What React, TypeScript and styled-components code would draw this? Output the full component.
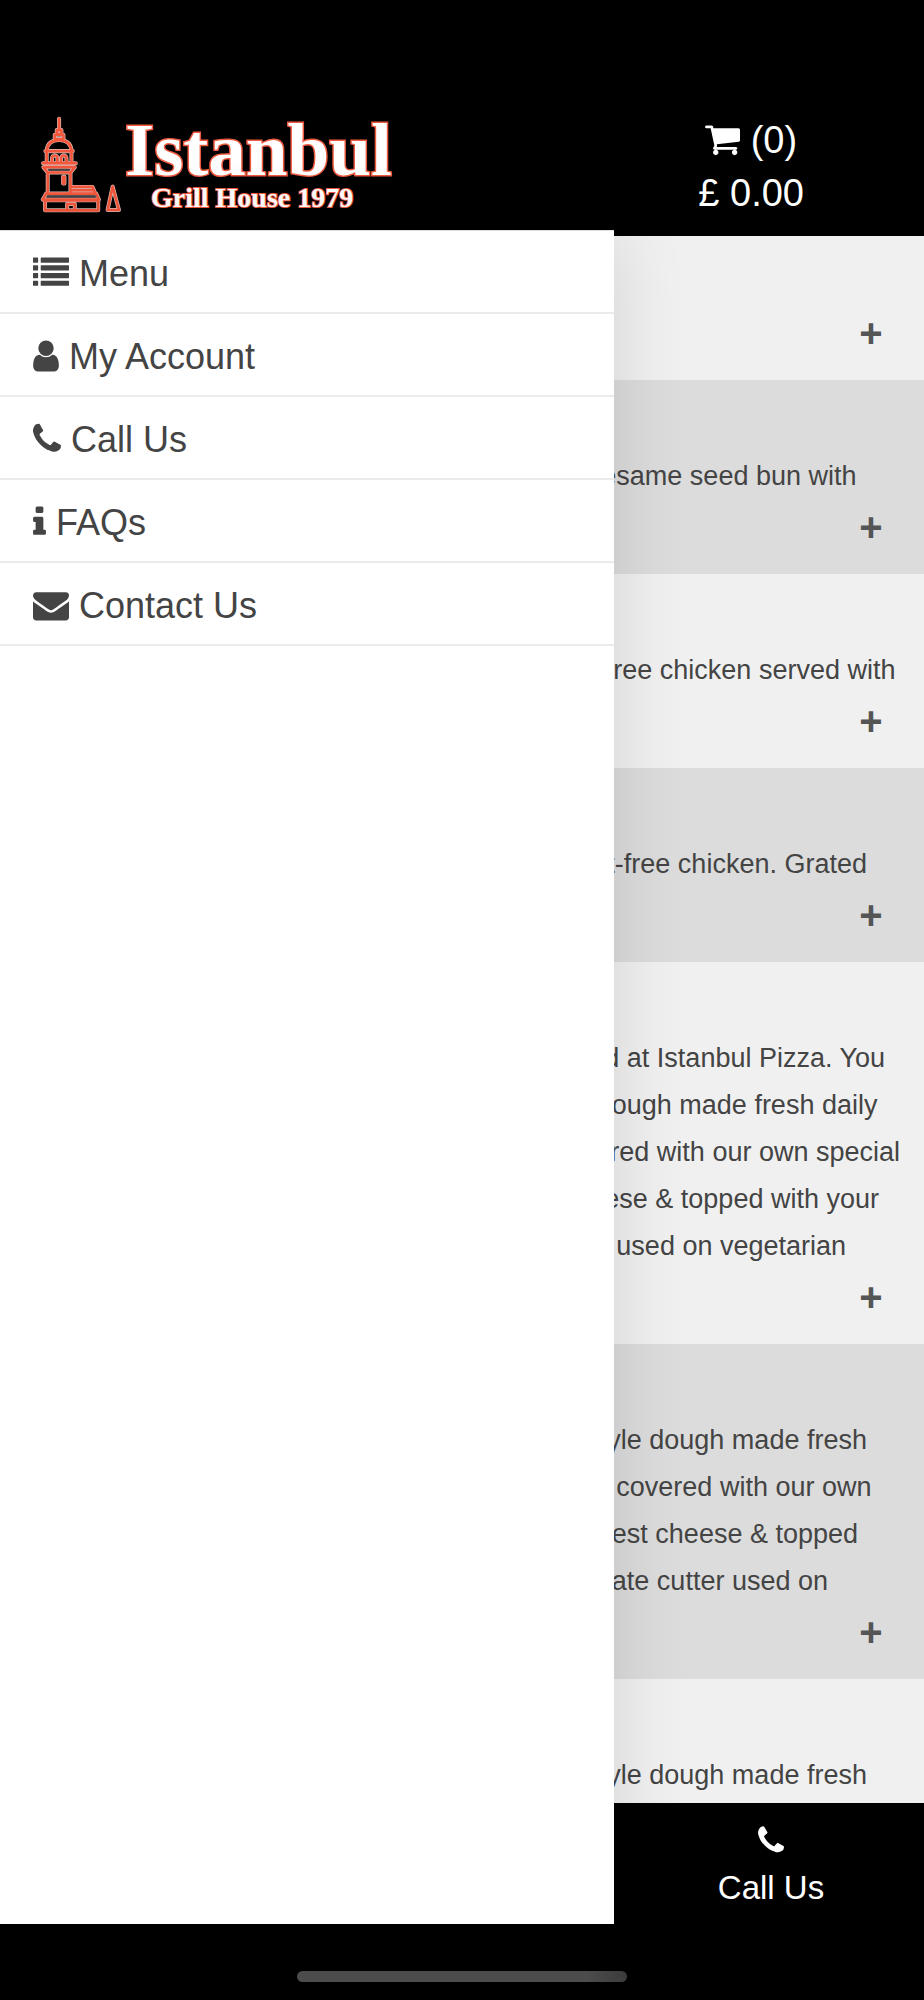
import React from 'react';
import styled, { createGlobalStyle } from 'styled-components';

const GlobalStyle = createGlobalStyle`
  * { box-sizing: border-box; }
  body {
    margin: 0;
    background: #000;
    color: #444;
    font-family: "Liberation Sans", Arial, sans-serif;
  }
`;

const Page = styled.div`
  position: relative;
  display: flex;
  flex-direction: column;
  height: 100vh;
  overflow: hidden;
`;

const Header = styled.header`
  display: flex;
  justify-content: space-between;
  flex: none;
  min-height: 236px;
  padding: 114px 0 0 40px;
  background: #000;
`;

const Logo = styled.a`
  display: flex;
  align-items: flex-start;
  gap: 3px;
  color: #fff;
  text-decoration: none;
`;

const Tower = styled.svg`
  flex: none;
  width: 82px;
  height: 97px;
  margin-top: 2px;
`;

const Wordmark = styled.span`
  display: flex;
  flex-direction: column;
  padding-top: 5px;
  font-family: "Liberation Serif", "Times New Roman", serif;
  font-weight: 700;
  white-space: nowrap;
  paint-order: stroke fill;
`;

const BrandName = styled.span`
  font-size: 75px;
  line-height: 62px;
  -webkit-text-stroke: 3px #ee5a40;
`;

const BrandTag = styled.span`
  padding-left: 26px;
  font-size: 28px;
  line-height: 34px;
  -webkit-text-stroke: 2px #ee5a40;
`;

const Cart = styled.a`
  width: 33%;
  padding-right: 54px;
  color: #fff;
  font-size: 38px;
  line-height: 53px;
  text-align: center;
  text-decoration: none;
`;

const CartLine = styled.span`
  display: block;
`;

const Glyph = styled.svg<{ $w: number; $h: number }>`
  width: ${(p) => p.$w}px;
  height: ${(p) => p.$h}px;
  vertical-align: -5px;
  fill: currentColor;
`;

const Dishes = styled.main`
  flex: 1;
  min-height: 0;
  overflow: hidden;
  background: #f0f0f0;
`;

const Dish = styled.article<{ $scrolled?: boolean }>`
  padding-top: ${(p) => (p.$scrolled ? 70 : 73)}px;
  background: #f0f0f0;
  &:nth-child(even) { background: #dcdcdc; }
`;

const Description = styled.p`
  margin: 0;
  padding: 0 18px 0 34px;
  font-size: 27px;
  line-height: 47px;
`;

const Actions = styled.div`
  display: flex;
  justify-content: flex-end;
  height: 74px;
  padding-right: 23px;
`;

const AddButton = styled.button`
  width: 60px;
  height: 54px;
  padding: 0;
  border: 0;
  background: none;
  color: #555;
  font: 700 40px/54px "Liberation Sans", Arial, sans-serif;
`;

const Drawer = styled.nav`
  position: absolute;
  top: 230px;
  bottom: 76px;
  left: 0;
  width: 614px;
  max-width: 90%;
  border-top: 1px solid #ddd;
  background: #fff;
  box-shadow: 0 0 70px rgba(0, 0, 0, 0.12);
`;

const DrawerLink = styled.a`
  display: block;
  padding: 4px 0 0 33px;
  border-bottom: 2px solid #ebebeb;
  color: #444;
  font-size: 36px;
  line-height: 77px;
  text-decoration: none;
`;

const TabBar = styled.footer`
  display: grid;
  grid-template-columns: repeat(3, 1fr);
  flex: none;
  height: 121px;
  background: #000;
`;

const Tab = styled.a`
  display: flex;
  flex-direction: column;
  align-items: center;
  grid-column: 3;
  padding: 21px 0 0 2px;
  color: #fff;
  font-size: 33px;
  line-height: 48px;
  text-decoration: none;
`;

const TabLabel = styled.span`
  padding-top: 7px;
`;

const HomeBar = styled.div`
  display: flex;
  justify-content: center;
  flex: none;
  height: 76px;
  padding-top: 47px;
  background: #000;
`;

const HomeIndicator = styled.div`
  width: 330px;
  height: 11px;
  border-radius: 6px;
  background: linear-gradient(to right, #4d4d4d 88%, #3c3c3c);
`;

type IconName = 'list' | 'user' | 'phone' | 'info' | 'envelope' | 'cart';

const icons: Record<IconName, { box: [number, number]; d: string }> = {
  list: {
    box: [0, 1792],
    d: 'M32 1280h192q32 0 32 32v192q0 32-32 32h-192q-32 0-32-32v-192q0-32 32-32zM32 896h192q32 0 32 32v192q0 32-32 32h-192q-32 0-32-32v-192q0-32 32-32zM32 512h192q32 0 32 32v192q0 32-32 32h-192q-32 0-32-32v-192q0-32 32-32zM32 128h192q32 0 32 32v192q0 32-32 32h-192q-32 0-32-32v-192q0-32 32-32zM416 1280h1344q32 0 32 32v192q0 32-32 32h-1344q-32 0-32-32v-192q0-32 32-32zM416 896h1344q32 0 32 32v192q0 32-32 32h-1344q-32 0-32-32v-192q0-32 32-32zM416 512h1344q32 0 32 32v192q0 32-32 32h-1344q-32 0-32-32v-192q0-32 32-32zM416 128h1344q32 0 32 32v192q0 32-32 32h-1344q-32 0-32-32v-192q0-32 32-32z',
  },
  user: {
    box: [256, 1280],
    d: 'M1536 1399q0 109-62.5 187t-150.5 78h-854q-88 0-150.5-78t-62.5-187q0-85 8.5-160.5t31.5-152 58.5-131 94-89 134.5-34.5q131 128 313 128t313-128q76 0 134.5 34.5t94 89 58.5 131 31.5 152 8.5 160.5zm-256-887q0 159-112.5 271.5t-271.5 112.5-271.5-112.5-112.5-271.5 112.5-271.5 271.5-112.5 271.5 112.5 112.5 271.5z',
  },
  phone: {
    box: [192, 1408],
    d: 'M1600 1240q0 27-10 70.5t-21 68.5q-21 50-122 106-94 51-186 51-27 0-53-3.5t-57.5-12.5-47-14.5-55.5-20.5-49-18q-98-35-175-83-127-79-264-216t-216-264q-48-77-83-175-3-9-18-49t-20.5-55.5-14.5-47-12.5-57.5-3.5-53q0-92 51-186 56-101 106-122 25-11 68.5-21t70.5-10q14 0 21 3 18 6 53 76 11 19 30 54t35 63.5 31 53.5q3 4 17.5 25t21.5 35.5 7 28.5q0 20-28.5 50t-62 55-62 53-28.5 46q0 9 5 22.5t8.5 20.5 14 24 11.5 19q76 137 174 235t235 174q2 1 19 11.5t24 14 20.5 8.5 22.5 5q18 0 46-28.5t53-62 55-62 50-28.5q14 0 28.5 7t35.5 21.5 25 17.5q25 15 53.5 31t63.5 35 54 30q70 35 76 53 3 7 3 21z',
  },
  info: {
    box: [576, 640],
    d: 'M1216 1344v128q0 26-19 45t-45 19h-512q-26 0-45-19t-19-45v-128q0-26 19-45t45-19h64v-384h-64q-26 0-45-19t-19-45v-128q0-26 19-45t45-19h384q26 0 45 19t19 45v576h64q26 0 45 19t19 45zm-128-1152v192q0 26-19 45t-45 19h-256q-26 0-45-19t-19-45v-192q0-26 19-45t45-19h256q26 0 45 19t19 45z',
  },
  envelope: {
    box: [0, 1792],
    d: 'M1792 710v794q0 66-47 113t-113 47h-1472q-66 0-113-47t-47-113v-794q44 49 101 87 362 246 497 345 57 42 92.5 65.5t94.5 48 110 24.5h2q51 0 110-24.5t94.5-48 92.5-65.5q170-123 498-345 57-39 100-87zm0-294q0 79-49 151t-122 123q-376 261-468 325-10 7-42.5 31t-54 38.5-52 32.5-57.5 27-50 9h-2q-23 0-50-9t-57.5-27-52-32.5-54-38.5-42.5-31q-91-64-262-182.5t-205-142.5q-62-42-117-115.5t-55-136.5q0-78 41.5-130t118.5-52h1472q65 0 112.5 47t47.5 113z',
  },
  cart: {
    box: [64, 1664],
    d: 'M704 1536q0 52-38 90t-90 38-90-38-38-90 38-90 90-38 90 38 38 90zm896 0q0 52-38 90t-90 38-90-38-38-90 38-90 90-38 90 38 38 90zm128-1088v512q0 24-16.5 42.5t-40.5 21.5l-1044 122q13 60 13 70 0 16-24 64h920q26 0 45 19t19 45-19 45-45 19h-1024q-26 0-45-19t-19-45q0-11 8-31.5t16-36 21.5-40 15.5-29.5l-177-823h-204q-26 0-45-19t-19-45 19-45 45-19h256q16 0 28.5 6.5t19.5 15.5 13 24.5 8 26 5.5 29.5 4.5 26h1201q26 0 45 19t19 45z',
  },
};

function Icon({ name, size = 36 }: { name: IconName; size?: number }) {
  const { box, d } = icons[name];
  return (
    <Glyph
      $w={Math.round((box[1] / 1792) * size)}
      $h={size}
      viewBox={`${box[0]} 0 ${box[1]} 1792`}
      aria-hidden="true"
    >
      <path d={d} />
    </Glyph>
  );
}

const towerLines =
  'M117 56V88M110 90H124V102H110ZM104 104H130V117H104ZM80 150Q84 120 117 120Q150 120 154 150M76 153H158' +
  'M80 155V186M154 155V186M96 187V174a8 8 0 0 1 16 0V187M123 187V174a8 8 0 0 1 16 0V187M69 189H167' +
  'M70 201H164L151 217H83ZM83 218V278M151 218V278M129 230H133V250H129Z' +
  'M153 260H217L224 277M155 270H220M78 280H228L236 298H68ZM75 300H234V330H75ZM141 328V311H164V328M277 259L262 329H296Z';

function TowerMark() {
  return (
    <Tower viewBox="60 48 245 290" fill="none" strokeLinejoin="round" strokeLinecap="round" aria-hidden="true">
      <path d={towerLines} stroke="#d9bdb8" strokeWidth="12" />
      <path d={towerLines} stroke="#f4573c" strokeWidth="8" />
      <path d="M88 209H146M84 289H226" stroke="#4a4444" strokeWidth="6" />
    </Tower>
  );
}

const links: { icon: IconName; label: string }[] = [
  { icon: 'list', label: 'Menu' },
  { icon: 'user', label: 'My Account' },
  { icon: 'phone', label: 'Call Us' },
  { icon: 'info', label: 'FAQs' },
  { icon: 'envelope', label: 'Contact Us' },
];

const dishes: string[] = [
  '',
  'Quarter pound burger served in a soft toasted sesame seed bun with',
  'Tender pieces of fresh marinated and grilled fat-free chicken served with',
  'Tender pieces of fresh marinated and roasted fat-free chicken. Grated',
  'The great original deep pan pizza as first created at Istanbul Pizza. You get to choose from a regular or light crust style dough made fresh daily on our premises, then gently stretched and covered with our own special pizza sauce, plus only the finest mozzarella cheese & topped with your favourite choice of our toppings. Separate cutter used on vegetarian',
  'Classic cheese and tomato pizza on our crust style dough made fresh daily on our premises, then gently stretched and covered with our own special pizza sauce, with a portion of only the finest cheese & topped with your favourite choice of our toppings. Separate cutter used on',
  'Classic cheese and tomato pizza on our crust style dough made fresh',
];

export default function App() {
  return (
    <Page>
      <GlobalStyle />
      <Header>
        <Logo href="#home">
          <TowerMark />
          <Wordmark>
            <BrandName>Istanbul</BrandName>
            <BrandTag>Grill House 1979</BrandTag>
          </Wordmark>
        </Logo>
        <Cart href="#basket">
          <CartLine>
            <Icon name="cart" size={38} /> (0)
          </CartLine>
          <CartLine>£ 0.00</CartLine>
        </Cart>
      </Header>

      <Dishes>
        {dishes.map((text, i) => (
          <Dish key={i} $scrolled={i === 0}>
            {text && <Description>{text}</Description>}
            <Actions>
              <AddButton type="button" aria-label="Add to basket">+</AddButton>
            </Actions>
          </Dish>
        ))}
      </Dishes>

      <TabBar>
        <Tab href="#call">
          <Icon name="phone" size={33} />
          <TabLabel>Call Us</TabLabel>
        </Tab>
      </TabBar>
      <HomeBar>
        <HomeIndicator />
      </HomeBar>

      <Drawer aria-label="Main">
        {links.map((link) => (
          <DrawerLink key={link.label} href={`#${link.icon}`}>
            <Icon name={link.icon} /> {link.label}
          </DrawerLink>
        ))}
      </Drawer>
    </Page>
  );
}
